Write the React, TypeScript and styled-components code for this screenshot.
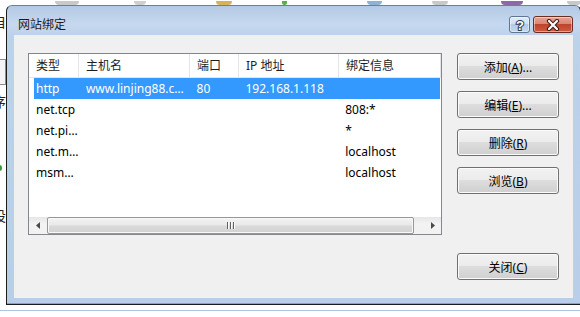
import styled, { createGlobalStyle } from 'styled-components';

// Global reset for the page
const GlobalStyle = createGlobalStyle`
  html, body {
    margin: 0;
    padding: 0;
    background: #ffffff;
    overflow: hidden;
  }
  body {
    font-family: "Noto Sans", "Noto Sans CJK SC", sans-serif;
    font-size: 12px;
    color: #000000;
  }
`;

const FONT = `"Noto Sans", "Noto Sans CJK SC", sans-serif`;

// Desktop behind the dialog
const Page = styled.div`
  width: 580px;
  height: 317px;
  overflow: hidden;
  display: grid;
  grid-template-columns: 6px 1fr;
  grid-template-rows: 5px 300px 1fr;
`;

const TopStrip = styled.div`
  grid-column: 1 / 3;
  display: flex;
  align-items: flex-end;
  overflow: hidden;
`;

const TopIcon = styled.span<{ $color: string; $left: number; $width: number }>`
  display: block;
  margin-left: ${(p) => p.$left}px;
  width: ${(p) => p.$width}px;
  height: 4px;
  border-radius: 0 0 4px 4px;
  background: ${(p) => p.$color};
`;

const LeftStrip = styled.div`
  overflow: hidden;
  display: flex;
  flex-direction: column;
`;

const Fragment = styled.span<{ $top: number }>`
  display: block;
  margin-top: ${(p) => p.$top}px;
  margin-left: -8px;
  font-family: "Noto Sans CJK SC", sans-serif;
  font-size: 14px;
  line-height: 16px;
  color: #222;
  white-space: nowrap;
`;

const FragmentBox = styled.span`
  display: block;
  margin-top: 30px;
  margin-left: -6px;
  width: 10px;
  height: 24px;
  border: 1px solid #8d8d8d;
  background: #f4f4f4;
`;

const FragmentIcon = styled.span`
  display: block;
  margin-top: 56px;
  margin-left: -3px;
  width: 5px;
  height: 6px;
  border-radius: 3px;
  background: #3b9a3b;
`;

const BottomStrip = styled.div`
  grid-column: 1 / 3;
  padding-top: 5px;
`;

const BottomLine = styled.div`
  height: 1px;
  background: #b2c3e2;
`;

// Dialog window
const Window = styled.div`
  box-sizing: border-box;
  width: 575px;
  height: 300px;
  border: 1px solid #1c1c1c;
  border-top-color: #6f7f93;
  border-radius: 6px 6px 0 0;
  background: linear-gradient(to bottom, #b3c9e4 0px, #c6d8ee 18px, #bcd1ea 30px, #b9cfe9 100%);
  display: flex;
  flex-direction: column;
  box-shadow: inset 0 -1px 0 #37c6e0;
`;

const TitleBar = styled.div`
  height: 29px;
  display: flex;
  align-items: flex-start;
  padding: 0 7px 0 11px;
`;

const TitleText = styled.span`
  margin-top: 10px;
  font-family: "Noto Sans CJK SC", sans-serif;
  font-size: 12px;
  line-height: 16px;
  color: #1b1b1b;
  flex: 1;
`;

const CaptionButton = styled.button<{ $kind: 'help' | 'close' }>`
  margin-top: 10px;
  margin-left: ${(p) => (p.$kind === 'close' ? 3 : 0)}px;
  width: ${(p) => (p.$kind === 'close' ? 40 : 21)}px;
  height: 17px;
  padding: 0;
  border-radius: 3px;
  display: flex;
  align-items: center;
  justify-content: center;
  border: 1px solid ${(p) => (p.$kind === 'close' ? '#6e2b21' : '#5f7594')};
  background: ${(p) =>
    p.$kind === 'close'
      ? 'linear-gradient(to bottom, #e7a595 0%, #d98571 45%, #c0432c 50%, #cf5a3d 100%)'
      : 'linear-gradient(to bottom, #e3ecf7 0%, #d0deef 45%, #b5c9e3 50%, #c5d7ec 100%)'};
  box-shadow: inset 0 0 0 1px rgba(255, 255, 255, 0.45);
`;

const Body = styled.div`
  height: 263px;
  margin: 0 7px;
  background: #f0f0f0;
  box-sizing: border-box;
  padding: 18px 14px 0 14px;
  display: flex;
  flex-direction: column;
`;

const TopRow = styled.div`
  display: flex;
  align-items: flex-start;
`;

// List view
const ListView = styled.div`
  box-sizing: border-box;
  width: 414px;
  height: 182px;
  border: 1px solid #828790;
  background: #ffffff;
  display: flex;
  flex-direction: column;
`;

const HeaderRow = styled.div`
  height: 23px;
  display: flex;
  border-bottom: 1px solid #e5e5e5;
  background: #ffffff;
`;

const HeaderCell = styled.div<{ $width: number }>`
  box-sizing: border-box;
  width: ${(p) => p.$width}px;
  padding-left: 7px;
  line-height: 23px;
  font-family: ${FONT};
  color: #1e1e1e;
  border-right: 1px solid #e5e5e5;
  white-space: nowrap;
  overflow: hidden;
`;

const Rows = styled.div`
  flex: 1;
`;

const Row = styled.div<{ $selected?: boolean }>`
  height: 21px;
  margin: 0 1px 0 5px;
  display: flex;
  background: ${(p) => (p.$selected ? '#3399ff' : 'transparent')};
  color: ${(p) => (p.$selected ? '#ffffff' : '#000000')};
`;

const Cell = styled.div<{ $width: number; $first?: boolean }>`
  box-sizing: border-box;
  width: ${(p) => p.$width}px;
  padding-left: ${(p) => (p.$first ? 2 : 7)}px;
  line-height: 21px;
  font-family: ${FONT};
  white-space: nowrap;
  overflow: hidden;
`;

// Horizontal scrollbar
const ScrollBar = styled.div`
  height: 17px;
  display: flex;
  align-items: stretch;
  background: linear-gradient(to bottom, #e6e6e6, #f3f3f3 40%, #f1f1f1);
`;

const ArrowButton = styled.div`
  width: 17px;
  display: flex;
  align-items: center;
  justify-content: center;
`;

const Thumb = styled.div`
  box-sizing: border-box;
  width: 367px;
  margin-left: 1px;
  border: 1px solid #979797;
  border-radius: 2px;
  background: linear-gradient(to bottom, #f4f4f4 0%, #e9e9e9 45%, #d9d9d9 55%, #d2d2d2 100%);
  box-shadow: inset 0 0 0 1px #f8f8f8;
  display: flex;
  align-items: center;
  justify-content: center;
  gap: 2px;
`;

const Grip = styled.span`
  width: 1px;
  height: 7px;
  background: #606060;
  box-shadow: 1px 0 0 #fafafa;
`;

const Track = styled.div`
  flex: 1;
`;

// Command buttons
const ButtonColumn = styled.div`
  margin-left: 15px;
  display: flex;
  flex-direction: column;
  gap: 11px;
`;

const Button = styled.button`
  box-sizing: border-box;
  width: 102px;
  height: 27px;
  padding: 0;
  border: 1px solid #707070;
  border-radius: 3px;
  background: linear-gradient(to bottom, #f2f2f2 0%, #ebebeb 50%, #dddddd 50%, #cfcfcf 100%);
  box-shadow: inset 0 0 0 1px #fbfbfb;
  font-family: ${FONT};
  font-size: 12px;
  color: #000000;
`;

const Key = styled.span`
  text-decoration: underline;
`;

const Footer = styled.div`
  margin-top: 18px;
  display: flex;
  justify-content: flex-end;
`;

const COLS = [50, 111, 49, 100, 102];

type Binding = {
  type: string;
  host: string;
  port: string;
  ip: string;
  info: string;
  selected?: boolean;
};

const bindings: Binding[] = [
  { type: 'http', host: 'www.linjing88.c…', port: '80', ip: '192.168.1.118', info: '', selected: true },
  { type: 'net.tcp', host: '', port: '', ip: '', info: '808:*' },
  { type: 'net.pi…', host: '', port: '', ip: '', info: '*' },
  { type: 'net.m…', host: '', port: '', ip: '', info: 'localhost' },
  { type: 'msm…', host: '', port: '', ip: '', info: 'localhost' },
];

function HelpGlyph() {
  return (
    <svg width="12" height="13" viewBox="0 0 12 13">
      <text
        x="6"
        y="11.5"
        textAnchor="middle"
        fontFamily="Liberation Sans, sans-serif"
        fontWeight="bold"
        fontSize="13"
        fill="#ffffff"
        stroke="#2d3c52"
        strokeWidth="2"
        paintOrder="stroke"
      >
        ?
      </text>
    </svg>
  );
}

function CloseGlyph() {
  return (
    <svg width="14" height="12" viewBox="0 0 14 12">
      <path d="M3 2 L11 10 M11 2 L3 10" stroke="#3a1a14" strokeWidth="4.2" strokeLinecap="round" />
      <path d="M3 2 L11 10 M11 2 L3 10" stroke="#ffffff" strokeWidth="2.2" strokeLinecap="round" />
    </svg>
  );
}

function Arrow({ dir }: { dir: 'left' | 'right' }) {
  return (
    <svg width="4" height="7" viewBox="0 0 4 7">
      {dir === 'left' ? <path d="M4 0 L0 3.5 L4 7 Z" fill="#4a4a4a" /> : <path d="M0 0 L4 3.5 L0 7 Z" fill="#4a4a4a" />}
    </svg>
  );
}

function BindingRow({ item }: { item: Binding }) {
  return (
    <Row $selected={item.selected}>
      <Cell $width={COLS[0] - 5} $first>
        {item.type}
      </Cell>
      <Cell $width={COLS[1]}>{item.host}</Cell>
      <Cell $width={COLS[2]}>{item.port}</Cell>
      <Cell $width={COLS[3]}>{item.ip}</Cell>
      <Cell $width={COLS[4]}>{item.info}</Cell>
    </Row>
  );
}

export default function App() {
  return (
    <>
      <GlobalStyle />
      <Page>
        <TopStrip>
          <TopIcon $color="#c9c9c9" $left={55} $width={24} />
          <TopIcon $color="#cfcfcf" $left={55} $width={12} />
          <TopIcon $color="#d6b35a" $left={70} $width={16} />
          <TopIcon $color="#59b04a" $left={50} $width={5} />
          <TopIcon $color="#8db2d8" $left={80} $width={16} />
          <TopIcon $color="#c8c8c8" $left={50} $width={16} />
          <TopIcon $color="#8a6aa6" $left={53} $width={22} />
          <TopIcon $color="#c8c8c8" $left={44} $width={14} />
        </TopStrip>
        <LeftStrip>
          <Fragment $top={8}>自</Fragment>
          <FragmentBox />
          <Fragment $top={8}>序</Fragment>
          <FragmentIcon />
          <Fragment $top={36}>设</Fragment>
        </LeftStrip>
        <Window>
          <TitleBar>
            <TitleText>网站绑定</TitleText>
            <CaptionButton $kind="help">
              <HelpGlyph />
            </CaptionButton>
            <CaptionButton $kind="close">
              <CloseGlyph />
            </CaptionButton>
          </TitleBar>
          <Body>
            <TopRow>
              <ListView>
                <HeaderRow>
                  <HeaderCell $width={COLS[0]}>类型</HeaderCell>
                  <HeaderCell $width={COLS[1]}>主机名</HeaderCell>
                  <HeaderCell $width={COLS[2]}>端口</HeaderCell>
                  <HeaderCell $width={COLS[3]}>IP 地址</HeaderCell>
                  <HeaderCell $width={COLS[4]}>绑定信息</HeaderCell>
                </HeaderRow>
                <Rows>
                  {bindings.map((item) => (
                    <BindingRow key={item.type} item={item} />
                  ))}
                </Rows>
                <ScrollBar>
                  <ArrowButton>
                    <Arrow dir="left" />
                  </ArrowButton>
                  <Thumb>
                    <Grip />
                    <Grip />
                    <Grip />
                  </Thumb>
                  <Track />
                  <ArrowButton>
                    <Arrow dir="right" />
                  </ArrowButton>
                </ScrollBar>
              </ListView>
              <ButtonColumn>
                <Button>
                  添加(<Key>A</Key>)...
                </Button>
                <Button>
                  编辑(<Key>E</Key>)...
                </Button>
                <Button>
                  删除(<Key>R</Key>)
                </Button>
                <Button>
                  浏览(<Key>B</Key>)
                </Button>
              </ButtonColumn>
            </TopRow>
            <Footer>
              <Button>
                关闭(<Key>C</Key>)
              </Button>
            </Footer>
          </Body>
        </Window>
        <BottomStrip>
          <BottomLine />
        </BottomStrip>
      </Page>
    </>
  );
}
